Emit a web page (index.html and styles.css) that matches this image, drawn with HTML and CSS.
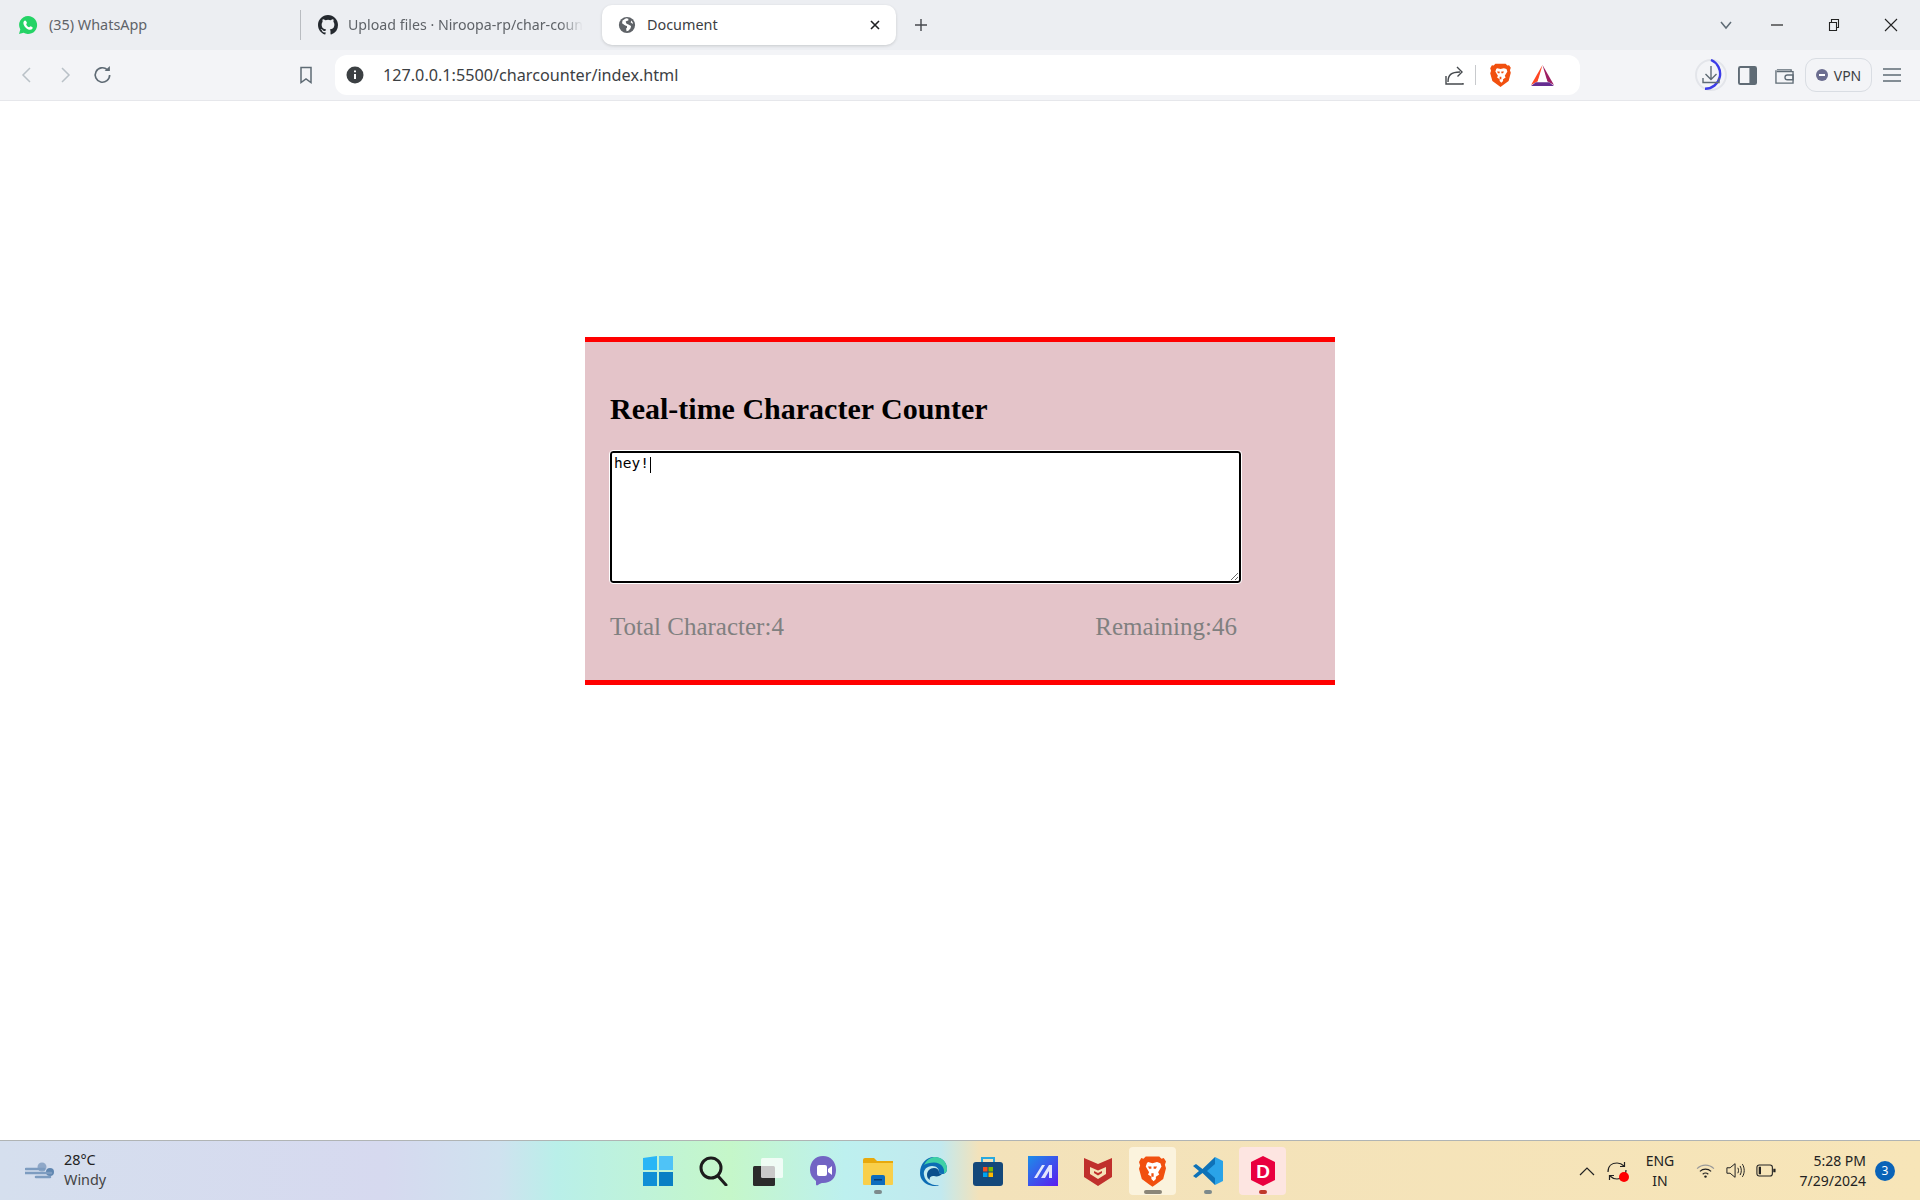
FILE: index.html
```html
<!DOCTYPE html>
<html lang="en">
<head>
    <meta charset="UTF-8">
    <title>Document</title>
    <link rel="stylesheet" href="styles.css">
</head>
<body>
<svg class="defs" width="0" height="0">
    <symbol id="brave" viewBox="0 0 24 28">
        <path fill="#f1500f" d="M6 1h12l2 2 2-.5 2 3-1 3 1 3-2.500 9.500-6 4.500-3.500 2.500-3.500-2.500-6-4.500L0 12l1-3-1-3 2-3.500 2 .5z"/>
        <path fill="#fff" d="M8 6l4 1 4-1 3 1 1 3-3 5 1 2-3 2v2l-2 2-2-2v-2l-3-2 1-2-3-5 1-3z"/>
        <path fill="#f1500f" d="M8 10h3v2H9zM13 10h3l-1 2h-2zM11 16h2v3h-2z"/>
    </symbol>
</svg>

<!-- tab strip -->
<div class="tabstrip">
    <div class="tab tab-first">
        <svg class="tab-icon" viewBox="0 0 20 20"><path fill="#25d366" d="M10 1a9 9 0 0 0-7.700 13.500L1 19l4.600-1.200A9 9 0 1 0 10 1z"/><path fill="#fff" d="M7 5.500c-.6 0-1.600 1-1.600 2.500 0 3 3.500 6.800 6.800 6.800 1.300 0 2.500-1 2.500-2 0-.5-1.800-1.500-2.300-1.500-.4 0-.8 1-1.200 1-1 0-3-2-3-3 0-.4.800-.8.800-1.200 0-.5-1.200-2.600-2-2.600z"/></svg>
        <span class="tab-title">(35) WhatsApp</span>
    </div>
    <div class="tab tab-second">
        <svg class="tab-icon" viewBox="0 0 16 16"><path fill="#24292f" d="M8 0C3.580 0 0 3.580 0 8c0 3.540 2.290 6.530 5.470 7.590.4.070.55-.17.55-.38v-1.340c-2.230.48-2.700-1.070-2.700-1.070-.36-.92-.89-1.170-.89-1.170-.73-.5.050-.49.050-.49.800.060 1.230.83 1.230.83.710 1.220 1.870.870 2.330.660.070-.52.280-.87.510-1.070-1.780-.2-3.640-.89-3.640-3.950 0-.87.310-1.590.82-2.150-.08-.2-.36-1.020.08-2.120 0 0 .67-.21 2.200.82a7.600 7.600 0 0 1 4 0c1.530-1.040 2.200-.82 2.200-.82.44 1.100.16 1.920.08 2.120.51.560.82 1.270.82 2.150 0 3.070-1.870 3.750-3.650 3.950.29.250.54.730.54 1.480v2.190c0 .21.150.46.550.38A8 8 0 0 0 16 8c0-4.420-3.580-8-8-8z"/></svg>
        <span class="tab-title tab-cut">Upload files · Niroopa-rp/char-coun</span>
    </div>
    <div class="tab tab-active">
        <svg class="tab-icon tab-globe" viewBox="0 0 20 20"><circle cx="10" cy="10" r="9" fill="#5f6368"/><path fill="#fff" d="M9 2.500L5 5l-.5 3L8 10.500l2 .5v2l-1 1 .5 3 2-.5 2.500-3 .5-2.500-3-1.500-2-1-1-2 1-1 2-.5V3zM15 5l-1 2 2 1.500.8-.5z"/></svg>
        <span class="tab-title">Document</span>
        <svg class="tab-close" viewBox="0 0 10 10"><path d="M1 1l8 8M9 1L1 9" stroke="#202124" stroke-width="1.600" fill="none"/></svg>
    </div>
    <svg class="tab-plus" viewBox="0 0 14 14"><path d="M7 1v12M1 7h12" stroke="#45484d" stroke-width="1.400" fill="none"/></svg>
    <div class="win-ctrl">
        <svg class="win-btn win-chevron" viewBox="0 0 14 14"><path d="M2 4l5 6 5-6" stroke="#5f6b75" stroke-width="1.500" fill="none"/></svg>
        <svg class="win-btn" viewBox="0 0 14 14"><path d="M1 7h12" stroke="#222" stroke-width="1.200" fill="none"/></svg>
        <svg class="win-btn" viewBox="0 0 14 14"><path d="M2.500 4.500h7v8h-7zM4.500 4.500V1.500h7v8h-2" stroke="#222" stroke-width="1.100" fill="none"/></svg>
        <svg class="win-btn" viewBox="0 0 14 14"><path d="M1 1l12 12M13 1L1 13" stroke="#222" stroke-width="1.100" fill="none"/></svg>
    </div>
</div>

<!-- toolbar -->
<div class="toolbar">
    <div class="tool-btn"><svg class="tool-icon" viewBox="0 0 18 18"><path d="M12 2L5 9l7 7" stroke="#b9c1c7" stroke-width="1.500" fill="none"/></svg></div>
    <div class="tool-btn"><svg class="tool-icon" viewBox="0 0 18 18"><path d="M6 2l7 7-7 7" stroke="#b9c1c7" stroke-width="1.500" fill="none"/></svg></div>
    <div class="tool-btn"><svg class="reload-icon" viewBox="0 0 18 18"><path d="M15 9a6.500 6.500 0 1 1-2.200-4.900" stroke="#5f6b75" stroke-width="1.500" fill="none"/><path d="M10.500 5.500h4.700V1z" fill="#5f6b75"/></svg></div>
    <div class="tool-btn bookmark"><svg class="tool-icon" viewBox="0 0 18 18"><path d="M4 1.500h10v15l-5-3.500-5 3.500z" stroke="#5f6b75" stroke-width="1.500" fill="none"/></svg></div>
    <div class="omnibox">
        <svg class="info-icon" viewBox="0 0 18 18"><circle cx="9" cy="9" r="8.500" fill="#3c4043"/><path d="M9 8v5M9 4.500v1.800" stroke="#fff" stroke-width="2" fill="none"/></svg>
        <span class="url">127.0.0.1:5500/charcounter/index.html</span>
        <svg class="share-icon" viewBox="0 0 20 20"><path d="M1 11v8h17v-1M3 17c0-7 3-10 12-10" stroke="#45494d" stroke-width="1.400" fill="none"/><path d="M12 2l5 5-4.500 4.500" stroke="#45494d" stroke-width="1.400" fill="none"/></svg>
        <span class="omni-sep"></span>
        <svg class="brave-small"><use href="#brave"/></svg>
        <svg class="bat-icon" viewBox="0 0 24 22"><path fill="#ff4724" d="M12 0L0 21l7-4z"/><path fill="#9e1f63" d="M12 0l12 21-7-4z"/><path fill="#662d91" d="M0 22h24l-5-4H5z"/><path fill="#fff" d="M12 8l-5 8.500h10z"/></svg>
    </div>
    <svg class="download-icon" viewBox="0 0 32 32"><circle cx="16" cy="16" r="15" stroke="#e3e5ea" stroke-width="2" fill="none"/><path d="M16 1a15 15 0 0 1-6 28.800" stroke="#3c3ce8" stroke-width="2.400" fill="none"/><path d="M16 7v13M10.500 15l5.500 5.500 5.500-5.500M8 19v4.500h16V19" stroke="#5f6b75" stroke-width="1.400" fill="none"/></svg>
    <svg class="side-icon" viewBox="0 0 20 20"><rect x="1" y="1" width="18" height="18" rx="1.500" stroke="#5f6b75" stroke-width="2" fill="none"/><path fill="#5f6b75" d="M12 1h7v18h-7z"/></svg>
    <svg class="wallet-icon" viewBox="0 0 20 20"><path d="M2 4h15v2M1 4.500V18h18V6H2" stroke="#5f6b75" stroke-width="1.400" fill="none"/><path d="M19 9.500h-6a2.500 2.500 0 0 0 0 5h6z" stroke="#5f6b75" stroke-width="1.400" fill="none"/></svg>
    <div class="vpn-pill">
        <svg class="vpn-dot" viewBox="0 0 12 12"><circle cx="6" cy="6" r="6" fill="#6b6d8f"/><path d="M3 6h6" stroke="#fff" stroke-width="2"/></svg>
        <span>VPN</span>
    </div>
    <svg class="menu-icon" viewBox="0 0 18 14"><path d="M0 1h18M0 7h18M0 13h18" stroke="#5f6b75" stroke-width="1.400" fill="none"/></svg>
</div>

<!-- page -->
<main class="page">
    <section class="container">
        <h2 class="heading">Real-time Character Counter</h2>
        <div class="input-wrap">
            <textarea id="textarea" class="input">hey!</textarea>
            <span class="caret"></span>
        </div>
        <div class="stats">
            <span>Total Character:<span id="total">4</span></span>
            <span>Remaining:<span id="remaining">46</span></span>
        </div>
    </section>
</main>

<!-- taskbar -->
<footer class="taskbar">
    <div class="weather">
        <svg class="weather-icon" viewBox="0 0 30 18"><circle cx="17" cy="5" r="4.500" fill="#8fa8c8"/><circle cx="25" cy="10" r="4" fill="#5f86b0"/><path d="M1 7h18M0 11h26M11 15h14" stroke="#7d9cc0" stroke-width="2.600" fill="none" stroke-linecap="round"/></svg>
        <div class="weather-text">
            <span class="temp">28°C</span>
            <span class="cond">Windy</span>
        </div>
    </div>
    <div class="apps">
        <div class="app"><svg class="app-icon" viewBox="0 0 30 30"><path fill="#29b6f6" d="M0 2l14-2v14H0z"/><path fill="#4fc3f7" d="M16 0h14v14H16z"/><path fill="#0f8fd6" d="M0 16h14v14H0z"/><path fill="#0a7fc4" d="M16 16h14v14H16z"/></svg></div>
        <div class="app"><svg class="app-icon" viewBox="0 0 30 30"><circle cx="13" cy="12" r="10" stroke="#1c1c1c" stroke-width="3" fill="none"/><path d="M20 20l8 9" stroke="#1c1c1c" stroke-width="3" stroke-linecap="round"/></svg></div>
        <div class="app"><svg class="app-icon" viewBox="0 0 30 30"><rect x="0" y="10" width="22" height="20" rx="1.500" fill="#2b2b2b"/><rect x="8" y="2" width="22" height="20" rx="1.500" fill="#fff" fill-opacity=".75"/></svg></div>
        <div class="app"><svg class="app-icon" viewBox="0 0 30 30"><path fill="#7264c4" d="M15 0c8 0 13 6 13 14s-5 13-13 13c-1.500 0-3 .5-5 2-1 .8-2 .5-2-1v-3C4 22 2 18 2 14 2 6 7 0 15 0z"/><rect x="9" y="9" width="10" height="11" rx="2" fill="#fff"/><path fill="#fff" d="M20 13l4-3v9l-4-3z"/></svg></div>
        <div class="app app-running"><svg class="app-icon" viewBox="0 0 30 30"><path fill="#e8a90c" d="M0 4a2 2 0 0 1 2-2h9l3 3h-14z"/><path fill="#f9cf4a" d="M0 6h30v22a1 1 0 0 1-1 1H1a1 1 0 0 1-1-1z"/><path fill="#e8a90c" d="M0 5h30v2H0z"/><path fill="#0f6cbd" d="M8 21a2 2 0 0 1 2-2h10a2 2 0 0 1 2 2v8H8z"/><path fill="#073c75" d="M11 23h8v1.500h-8z"/></svg></div>
        <div class="app"><svg class="app-icon" viewBox="0 0 30 30"><path fill="#0c6cb4" d="M2 17C2 8 8 1 16 1c8 0 13 5 13 12 0 3-2 5-5 5-2 0-3-1-3-2 0-3-2-6-7-6-6 0-9 5-8 9 1 7 8 11 15 10-3 2-7 1-10 0-5-2-9-6-9-12z"/><path fill="#3fd0a6" d="M6 9C9 3 14 1 17 1c7 0 12 5 12 12 0 2-1 4-3 4.500 1-6-3-11-10-11-4 0-8 1-10 2.500z"/><path fill="#0a4f8c" d="M9 19c0-4 3-7 7-7 3 0 5 2 5 4 0 1 1 2 3 2-2 2-5 3-8 2-3 0-5 1-4 4-2-1-3-3-3-5z"/></svg></div>
        <div class="app"><svg class="app-icon" viewBox="0 0 30 30"><path d="M9 8V2h12v6" stroke="#29a9df" stroke-width="2" fill="none"/><rect x="0" y="6" width="30" height="24" rx="3" fill="#14487a"/><path fill="#f25022" d="M10 11h4.500v4.500H10z"/><path fill="#7fba00" d="M15.500 11H20v4.500h-4.500z"/><path fill="#00a4ef" d="M10 16.500h4.500V21H10z"/><path fill="#ffb900" d="M15.500 16.500H20V21h-4.500z"/></svg></div>
        <div class="app"><svg class="app-icon" viewBox="0 0 30 30"><defs><linearGradient id="mgrad" x1="0" y1="0" x2="1" y2="1"><stop offset="0" stop-color="#1c8ee8"/><stop offset="1" stop-color="#5b1cf0"/></linearGradient></defs><rect width="30" height="30" fill="url(#mgrad)"/><path fill="#fff" fill-opacity=".85" d="M6 22l8-13h3L9 22zM13 22l8-13h3v13h-3V15l-4 7z"/></svg></div>
        <div class="app"><svg class="app-icon" viewBox="0 0 30 30"><path fill="#c0302c" d="M1 2l14 6 14-6v19l-14 9-14-9z"/><path fill="#f5e3b9" d="M7 11l8 3.500 8-3.500v7l-8 5-8-5z"/><path fill="#c0302c" d="M11 15l4 2 4-2v2l-4 2.500-4-2.500z"/></svg></div>
        <div class="app app-active"><svg class="app-brave"><use href="#brave"/></svg></div>
        <div class="app app-running"><svg class="app-icon" viewBox="0 0 30 30"><path fill="#0e72b8" d="M22 1L9.500 13 3 8 0 10l6 5-6 5 3 2 6.500-5L22 29z"/><path fill="#2aa3e8" d="M22 1l8 4v20l-8 4zM22 8l-8 7 8 7z"/></svg></div>
        <div class="app app-tinted"><svg class="app-icon" viewBox="0 0 30 30"><path fill="#e9003f" d="M15 0l12 6v18l-12 6-12-6V6z"/><text class="app-letter" x="15" y="22">D</text></svg></div>
    </div>
    <div class="tray">
        <svg class="tray-chevron" viewBox="0 0 16 10"><path d="M1 9l7-7 7 7" stroke="#222" stroke-width="1.200" fill="none"/></svg>
        <div class="sync">
            <svg class="sync-icon" viewBox="0 0 20 20"><path d="M1 11C1 5 5 2 10 2c3 0 5 1 7 3M19 9c0 6-4 9-9 9-3 0-5-1-7-3" stroke="#222" stroke-width="1.200" fill="none"/><path d="M17.500 1v4.500H13M2.500 19v-4.500H7" stroke="#222" stroke-width="1.200" fill="none"/></svg>
            <span class="sync-dot"></span>
        </div>
        <div class="lang"><span>ENG</span><span>IN</span></div>
        <svg class="wifi-icon" viewBox="0 0 20 16"><path d="M1 6c5-5 13-5 18 0" stroke="#999" stroke-width="1.100" fill="none"/><path d="M4 9c3.500-3.300 8.500-3.300 12 0M7 12c1.700-1.500 4.300-1.500 6 0" stroke="#222" stroke-width="1.200" fill="none"/><circle cx="10" cy="14.500" r="1.300" fill="#222"/></svg>
        <svg class="speaker-icon" viewBox="0 0 22 18"><path d="M1 6v6h3.500L10 16.500v-15L4.500 6z" stroke="#222" stroke-width="1.100" fill="none"/><path d="M13 6c1 2 1 4 0 6M15.500 4c1.800 3 1.800 7 0 10M18 2c2.700 4 2.700 10 0 14" stroke="#222" stroke-width="1.100" fill="none"/></svg>
        <svg class="battery-icon" viewBox="0 0 22 14"><rect x="1" y="1" width="17" height="12" rx="2.500" stroke="#222" stroke-width="1.200" fill="none"/><path fill="#222" d="M3 3h2.500v8H3zM19 5h2.500v4H19z"/></svg>
        <div class="clock"><span>5:28 PM</span><span>7/29/2024</span></div>
        <span class="notify">3</span>
    </div>
</footer>
</body>
</html>
```

FILE: styles.css
```css
html,body,h2{margin:0;padding:0}
body{
    width:1920px;
    height:1200px;
    display:flex;
    flex-direction:column;
    background:#fff;
    overflow:hidden;
    font-family:"Noto Sans","Open Sans",sans-serif;
}
svg{display:block;flex:none}
.defs{position:absolute}

/* tab strip */
.tabstrip{
    height:50px;
    flex:none;
    display:flex;
    align-items:center;
    background:#eceef2;
}
.tab{
    height:40px;
    display:flex;
    align-items:center;
    font-size:14.4px;
    color:#5f6368;
}
.tab-icon{width:20px;height:20px;margin-right:11px}
.tab-first{width:282px;padding-left:18px;border-right:1px solid #b9bcc1;height:30px}
.tab-second{width:275px;padding-left:17px;margin-right:9px}
.tab-second .tab-icon{margin-right:10px}
.tab-title{white-space:nowrap;padding-bottom:2px}
.tab-cut{
    font-size:14.2px;
    -webkit-mask-image:linear-gradient(to right,#000 90%,transparent);
    mask-image:linear-gradient(to right,#000 90%,transparent);
}
.tab-active{
    width:294px;
    padding-left:16px;
    background:#fff;
    border-radius:10px;
    color:#3c4043;
    box-shadow:0 1px 3px rgba(60,64,67,.2);
    box-sizing:border-box;
}
.tab-globe{width:18px;height:18px;margin-right:11px}
.tab-close{width:10px;height:10px;margin-left:auto;margin-right:16px}
.tab-plus{width:14px;height:14px;margin-left:18px}
.win-ctrl{margin-left:auto;display:flex;align-items:center;margin-right:22px;gap:43px}
.win-btn{width:14px;height:14px}
.win-chevron{margin-right:-6px}

/* toolbar */
.toolbar{
    height:50px;
    flex:none;
    display:flex;
    align-items:center;
    padding-left:8px;
    background:#f3f4f7;
    border-bottom:1px solid #e6e7eb;
}
.tool-btn{width:38px;display:flex;justify-content:center}
.tool-icon{width:18px;height:18px}
.reload-icon{width:20px;height:20px}
.bookmark{margin-left:165px;margin-right:10px}
.omnibox{
    width:1245px;
    height:40px;
    display:flex;
    align-items:center;
    padding-left:11px;
    box-sizing:border-box;
    background:#fff;
    border-radius:12px;
}
.info-icon{width:18px;height:18px;margin-right:19px}
.url{font-size:16.2px;color:#3c4043;white-space:nowrap}
.share-icon{width:20px;height:20px;margin-left:auto}
.omni-sep{width:1px;height:20px;background:#c8cacd;margin:0 14px 0 10px}
.brave-small{width:21px;height:24px}
.bat-icon{width:23px;height:21px;margin-left:20px;margin-right:26px}
.download-icon{width:32px;height:32px;margin-left:115px}
.side-icon{width:19px;height:19px;margin-left:11px}
.wallet-icon{width:19px;height:19px;margin-left:18px}
.vpn-pill{
    width:67px;
    height:34px;
    margin-left:11px;
    display:flex;
    align-items:center;
    justify-content:center;
    gap:6px;
    box-sizing:border-box;
    border:1px solid #d9dde3;
    border-radius:11px;
    font-size:14px;
    color:#3c4043;
}
.vpn-dot{width:12px;height:12px}
.menu-icon{width:18px;height:14px;margin-left:11px}

/* page */
.page{flex:1}
.container{
    width:750px;
    height:348px;
    box-sizing:border-box;
    margin:236px auto 0;
    padding:0 25px;
    background:#e4c4c9;
    border-top:5px solid red;
    border-bottom:5px solid red;
    font-family:"Liberation Serif",serif;
}
.heading{
    margin-top:50px;
    font-size:30px;
    line-height:34px;
    color:#000;
}
.input-wrap{
    position:relative;
    margin-top:25px;
}
.input{
    display:block;
    width:631px;
    height:132px;
    box-sizing:border-box;
    padding:2px;
    border:2px solid #000;
    border-radius:3px;
    outline:1px solid #fff;
    resize:both;
    font-family:"DejaVu Sans Mono",monospace;
    font-size:14.5px;
    color:#000;
}
.caret{
    position:absolute;
    left:40px;
    top:6px;
    width:1px;
    height:16px;
    background:#000;
}
.stats{
    width:627px;
    display:flex;
    justify-content:space-between;
    margin-top:30px;
    font-size:25px;
    color:#808080;
}

/* taskbar */
.taskbar{
    height:60px;
    flex:none;
    display:grid;
    grid-template-columns:1fr auto 1fr;
    align-items:center;
    box-sizing:border-box;
    border-top:1px solid #b0b4b4;
    background:linear-gradient(to right,#d5dfee 0%,#d6d9ef 20%,#cfe2ef 26%,#b9efe9 29%,#c5f7c9 38%,#bdf0ef 44%,#c2e9ef 49%,#f3e2ba 51%,#f7e5b8 100%);
    color:#222;
}
.weather{display:flex;align-items:center;padding-left:25px;gap:9px}
.weather-icon{width:30px;height:18px}
.weather-text{display:flex;flex-direction:column;font-size:14.4px;line-height:20px;margin-top:-2px}
.cond{color:#444}
.apps{display:flex}
.app{
    width:47px;
    height:48px;
    margin:0 4px;
    display:flex;
    align-items:center;
    justify-content:center;
    position:relative;
}
.app-icon{width:30px;height:30px}
.app-brave{width:27px;height:32px}
.app-active{background:#fbf3dd;border-radius:4px}
.app-tinted{background:#fde5e1;border-radius:4px}
.app-running::after,.app-active::after,.app-tinted::after{
    content:"";
    position:absolute;
    bottom:1px;
    left:50%;
    width:8px;
    height:4px;
    margin-left:-4px;
    border-radius:2px;
    background:#7d8a8c;
}
.app-active::after{width:18px;margin-left:-9px;background:#8b8678}
.app-tinted::after{background:#c0392b}
.app-letter{font:bold 19px "Liberation Sans",sans-serif;fill:#fff;text-anchor:middle}
.tray{display:flex;align-items:center;justify-content:flex-end;font-size:14px;line-height:20px}
.tray-chevron{width:16px;height:10px}
.sync{position:relative;margin-left:12px}
.sync-icon{width:20px;height:20px}
.sync-dot{
    position:absolute;
    right:-2px;
    bottom:-1px;
    width:10px;
    height:10px;
    border-radius:50%;
    background:#f00;
}
.lang{width:40px;margin-left:13px;display:flex;flex-direction:column;align-items:center}
.wifi-icon{width:19px;height:15px;margin-left:16px}
.speaker-icon{width:20px;height:17px;margin-left:11px}
.battery-icon{width:20px;height:13px;margin-left:10px}
.clock{width:80px;margin-left:10px;display:flex;flex-direction:column;align-items:flex-end}
.notify{
    width:20px;
    height:20px;
    margin-left:9px;
    margin-right:25px;
    display:flex;
    align-items:center;
    justify-content:center;
    border-radius:50%;
    background:#0a63b8;
    color:#fff;
    font-size:12px;
}
```
